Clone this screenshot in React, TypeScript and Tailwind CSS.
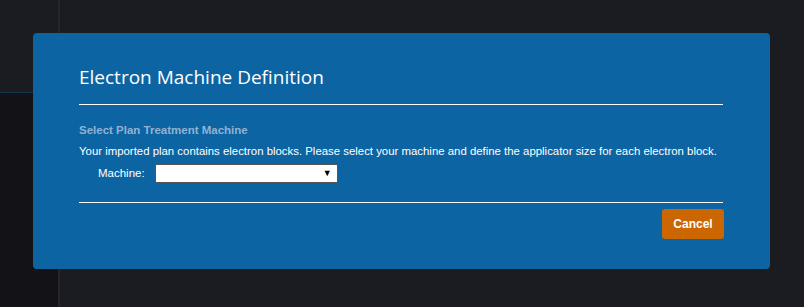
export default function App() {
  return (
    <div className="relative flex h-[307px] w-[804px] overflow-hidden bg-[#1b1c21] font-['Liberation_Sans',Arial,sans-serif]">
      {/* app behind the dialog */}
      <div className="flex w-[60px] flex-col border-r-2 border-[#24262c] bg-[#131317]">
        <div className="h-[93px] border-b border-[#123652] bg-[#1b1c21]" />
      </div>
      <div className="flex-1 bg-[#1b1c21]" />

      {/* dialog */}
      <div className="absolute left-[33px] top-[33px] flex h-[236px] w-[737px] flex-col rounded-[4px] bg-[#0d64a2] px-[46px] pt-[32px] text-white">
        <h1 className="font-['Open_Sans',sans-serif] text-[19px] leading-[24px] text-white">
          Electron Machine Definition
        </h1>
        <div className="mt-[15px] h-px w-[644px] bg-white" />
        <div className="mt-[18px] text-[11.5px] font-bold leading-[14px] text-[#8fb3d3]">
          Select Plan Treatment Machine
        </div>
        <p className="mt-[7px] whitespace-nowrap text-[11.4px] leading-[14px] text-white">
          Your imported plan contains electron blocks. Please select your machine and define the applicator size for each electron block.
        </p>
        <div className="mt-[6px] flex items-center gap-[10px] pl-[19px]">
          <span className="text-[11.5px]">Machine:</span>
          <div className="flex h-[19px] w-[183px] items-center justify-end border border-[#555] bg-white pr-[5px]">
            <span className="text-[9px] leading-none text-black">▼</span>
          </div>
        </div>
        <div className="mt-[19px] h-px w-[644px] bg-white" />
        <div className="mt-[6px] flex justify-end">
          <button className="h-[30px] w-[62px] rounded-[3px] bg-[#cc6600] text-[12px] font-bold text-white">
            Cancel
          </button>
        </div>
      </div>
    </div>
  );
}
